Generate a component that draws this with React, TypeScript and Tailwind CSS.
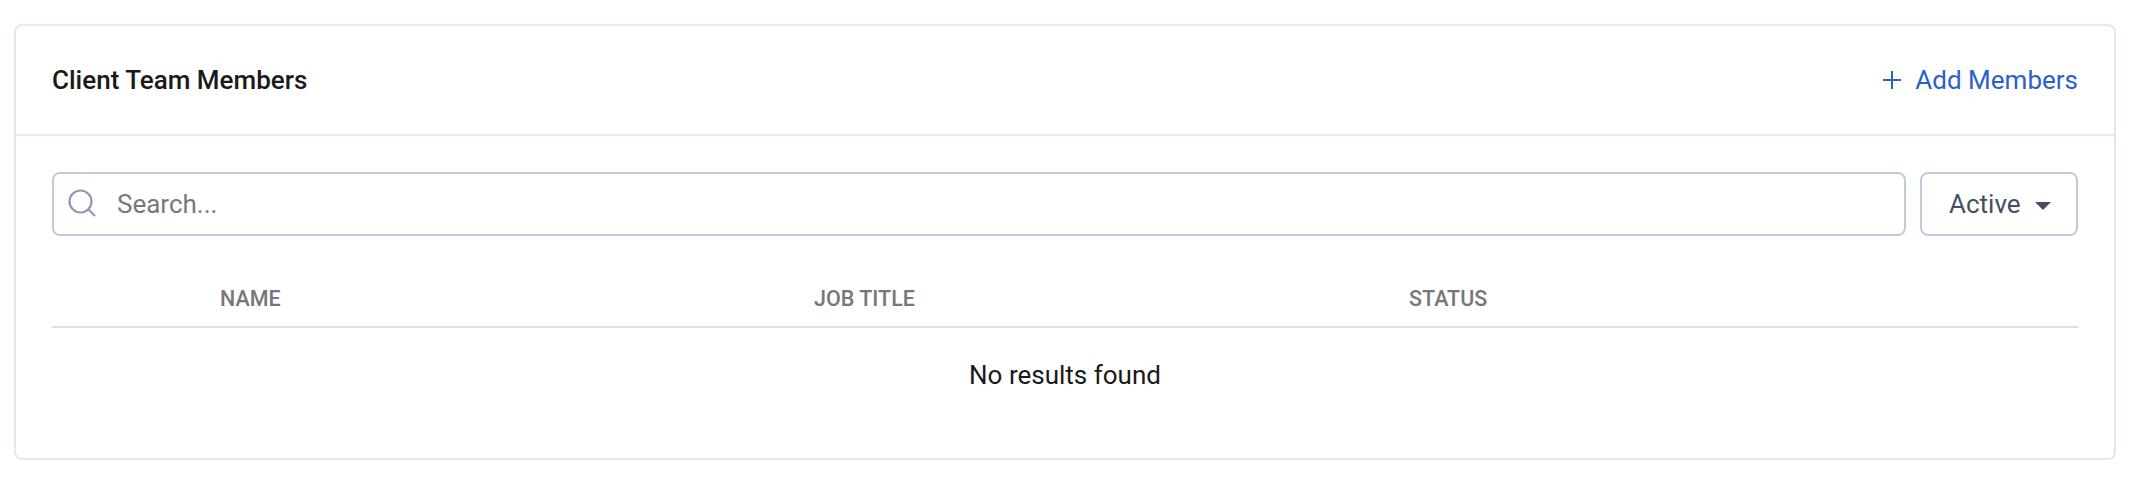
export default function App() {
  return (
    <div className="h-[486px] bg-white font-['Roboto',sans-serif] pl-[14px] pr-[28px] pt-[24px]">
      <div className="w-[2102px] h-[436px] border-2 border-[#e2e8f0] rounded-[8px] bg-white">
        <div className="h-[110px] border-b-2 border-[#e2e8f0] pl-[36px] pr-[36px] pb-[1px] flex items-center justify-between">
          <h2 className="text-[26px] font-medium text-[#1a1a1a] leading-none">Client Team Members</h2>
          <button className="flex items-center text-[26px] text-[#2b5fcc] leading-none">
            <svg className="w-[18px] h-[18px] mr-[14px]" viewBox="0 0 18 18" fill="none" stroke="#2b5fcc" strokeWidth="2">
              <path d="M9 0v18M0 9h18" />
            </svg>
            Add Members
          </button>
        </div>
        <div className="pl-[36px] pr-[36px] pt-[36px]">
          <div className="flex gap-[14px]">
            <div className="flex-1 h-[64px] border-2 border-[#c0ccdb] rounded-[8px] flex items-center pl-[14px]">
              <svg className="w-[28px] h-[28px] mr-[21px] mb-[3px]" viewBox="0 0 28 28" fill="none" stroke="#8a9ab2" strokeWidth="2.2">
                <circle cx="12.5" cy="12.5" r="11" />
                <path d="M20.5 20.5l6.5 6.5" />
              </svg>
              <span className="text-[26px] text-[#75797f] leading-none">Search...</span>
            </div>
            <button className="w-[158px] h-[64px] border-2 border-[#c0ccdb] rounded-[8px] flex items-center pl-[27px] text-[26px] text-[#44505f] leading-none">
              Active
              <svg className="w-[16px] h-[8px] ml-[14px] mt-[3px]" viewBox="0 0 16 8" fill="#44505f">
                <path d="M0 0h16L8 8z" />
              </svg>
            </button>
          </div>
          <div className="mt-[37px] grid grid-cols-[594px_595px_1fr] h-[55px] border-b-2 border-[#dedfe1] pl-[168px] items-center pb-[2px] text-[21.5px] font-medium text-[#777777] leading-none">
            <span>NAME</span>
            <span>JOB TITLE</span>
            <span>STATUS</span>
          </div>
          <p className="mt-[34px] text-center text-[26px] text-[#1a1a1a] leading-none">No results found</p>
        </div>
      </div>
    </div>
  );
}
